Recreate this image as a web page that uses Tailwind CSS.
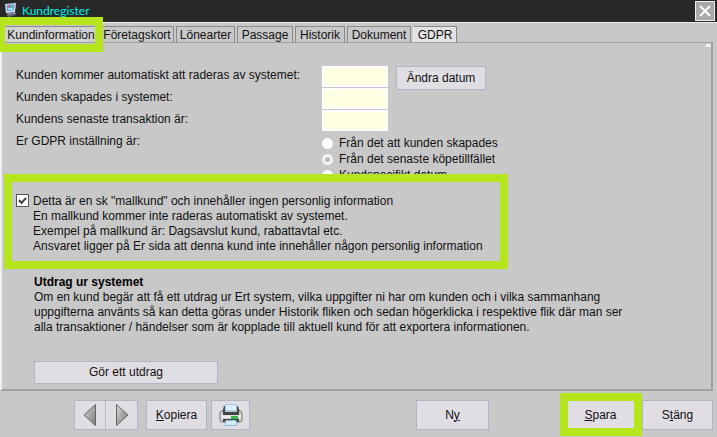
<!DOCTYPE html>
<html lang="sv">
<head>
  <meta charset="UTF-8">
  <meta name="viewport" content="width=device-width, initial-scale=1.0">
  <title>Kundregister</title>
  <script src="https://cdn.jsdelivr.net/npm/@tailwindcss/browser@4"></script>
</head>
<body class="bg-[#c8c8c8] min-h-screen flex flex-col font-['Liberation_Sans',Arial,sans-serif] text-[12px] leading-[15px] text-[#111]">
  <header class="h-[22px] shrink-0 bg-[#282828] flex items-center justify-between pl-1 pr-[2px]">
    <div class="flex items-center gap-1 pb-[2px]">
      <svg class="w-[14px] h-[14px]" viewBox="0 0 14 14" aria-hidden="true">
        <path d="M1 1l11-1-1 9-9 1z" fill="#d5dfee"/>
        <path d="M2.500 2l8-.7-.7 6.200-6.800.7z" fill="#5b9be0"/>
        <path d="M4 2.500h2v2H4z" fill="#e0686a"/>
        <path d="M7 2.500h2v2H7z" fill="#6cc070"/>
        <path d="M4 5h5v2H4z" fill="#a8e0f5"/>
        <path d="M3 10l8-1 1 2-8 1z" fill="#8791a5"/>
        <path d="M2 12l9-1 1 1-8 2z" fill="#5d6679"/>
      </svg>
      <h1 class="font-[Lato,sans-serif] text-[12px] text-[#00f0e6]">Kundregister</h1>
    </div>
    <button type="button" aria-label="Stäng fönster" class="w-5 h-5 bg-[#a8a8a8] border border-[#eee] flex items-center justify-center">
      <svg class="w-3 h-3" viewBox="0 0 12 12" fill="none" stroke="#fff" stroke-width="2"><path d="M1 1l10 10M11 1L1 11"/></svg>
    </button>
  </header>

  <nav class="flex gap-[2px] pt-[3px] pl-[5px] border-t border-[#eee] h-5 shrink-0">
    <button type="button" class="h-[17px] w-[93px] border-r border-t border-[#8a8a8a] bg-[#d2d2d2] whitespace-nowrap">Kundinformation</button>
    <button type="button" class="h-[17px] w-[74px] border border-b-0 border-[#8a8a8a] bg-[#c8c8c8]">Företagskort</button>
    <button type="button" class="h-[17px] w-[59px] border border-b-0 border-[#8a8a8a] bg-[#c8c8c8]">Lönearter</button>
    <button type="button" class="h-[17px] w-[56px] border border-b-0 border-[#8a8a8a] bg-[#c8c8c8]">Passage</button>
    <button type="button" class="h-[17px] w-[50px] border border-b-0 border-[#8a8a8a] bg-[#c8c8c8]">Historik</button>
    <button type="button" class="h-[17px] w-[64px] border border-b-0 border-[#8a8a8a] bg-[#c8c8c8]">Dokument</button>
    <button type="button" class="h-[17px] w-[44px] border border-b-0 border-[#8a8a8a] border-l-[#eee] bg-[#e2e2e2]">GDPR</button>
  </nav>

  <main class="mr-1 grow border-t border-r-2 border-b-2 border-[#a0a0a0] border-l-2 border-l-[#eee] pl-[14px] pt-[23px] relative">
    <span class="absolute right-0 top-px w-[5px] h-[3px] bg-[#eee]"></span>
    <div class="grid grid-cols-[306px_66px_1fr] auto-rows-[22px]">
      <label for="deleteDate" class="pt-[2px]">Kunden kommer automatiskt att raderas av systemet:</label>
      <input id="deleteDate" type="text" class="bg-[#ffffe1] border-2 border-white h-[21px] w-full">
      <div class="pl-2"><button type="button" class="h-6 w-[90px] bg-[#e0dde3] border border-[#b4b4c8]">Ändra datum</button></div>
      <label for="createdDate" class="pt-[2px]">Kunden skapades i systemet:</label>
      <input id="createdDate" type="text" class="bg-[#ffffe1] border-2 border-white h-[21px] w-full">
      <span></span>
      <label for="lastDate" class="pt-[2px]">Kundens senaste transaktion är:</label>
      <input id="lastDate" type="text" class="bg-[#ffffe1] border-2 border-white h-[21px] w-full">
    </div>
    <fieldset class="grid grid-cols-[306px_1fr] h-[62px] pt-[2px]">
      <legend class="float-left">Er GDPR inställning är:</legend>
      <div class="col-start-2 flex flex-col gap-px pt-[2px]">
        <label class="flex items-center gap-[6px]"><input type="radio" name="gdpr" class="appearance-none w-[11px] h-[11px] rounded-full bg-white">Från det att kunden skapades</label>
        <label class="flex items-center gap-[6px]"><input type="radio" name="gdpr" checked class="appearance-none w-[11px] h-[11px] rounded-full bg-[#bbb] border-[3px] border-[#f4f4f4]">Från det senaste köpetillfället</label>
        <label class="flex items-center gap-[6px]"><input type="radio" name="gdpr" class="appearance-none w-[11px] h-[11px] rounded-full bg-white">Kundspecifikt datum</label>
      </div>
    </fieldset>
    <div class="flex gap-1">
      <span class="relative w-[13px] h-[13px] shrink-0">
        <input id="template" type="checkbox" checked class="appearance-none block w-[13px] h-[13px] bg-white border border-[#555]">
        <svg class="absolute inset-0 w-[13px] h-[13px] pointer-events-none" viewBox="0 0 13 13" fill="none" stroke="#444" stroke-width="2"><path d="M3 6l2.500 3L10 4"/></svg>
      </span>
      <label for="template">Detta är en sk "mallkund" och innehåller ingen personlig information<br>En mallkund kommer inte raderas automatiskt av systemet.<br>Exempel på mallkund är: Dagsavslut kund, rabattavtal etc.<br>Ansvaret ligger på Er sida att denna kund inte innehåller någon personlig information</label>
    </div>
    <section class="pl-[18px] pt-[21px]">
      <h2 class="font-bold text-black">Utdrag ur systemet</h2>
      <p>Om en kund begär att få ett utdrag ur Ert system, vilka uppgifter ni har om kunden och i vilka sammanhang<br>uppgifterna använts så kan detta göras under Historik fliken och sedan högerklicka i respektive flik där man ser<br>alla transaktioner / händelser som är kopplade till aktuell kund för att exportera informationen.</p>
      <button type="button" class="mt-[26px] block h-[23px] w-[184px] bg-[#e0dde3] border border-[#b4b4c8]">Gör ett utdrag</button>
    </section>
    <div class="absolute left-[2px] top-[131px] w-[504px] h-[95px] border-8 border-[#b5e61d] pointer-events-none"></div>
  </main>

  <footer class="shrink-0 flex items-center h-[46px] pt-[2px] pl-[74px] pr-1">
    <button type="button" aria-label="Föregående" class="w-8 h-[30px] bg-[#e0dde3] border border-[#b4b4c8] flex items-center justify-center">
      <svg class="w-[14px] h-6" viewBox="0 0 14 24">
        <defs><linearGradient id="metal" x1="0" y1="0" x2="1" y2="1"><stop offset="0" stop-color="#d8d8d8"/><stop offset="1" stop-color="#777"/></linearGradient></defs>
        <path d="M12.500 1.500v21L1 12z" fill="url(#metal)" stroke="#666"/>
      </svg>
    </button>
    <button type="button" aria-label="Nästa" class="w-8 h-[30px] bg-[#e0dde3] border border-l-0 border-[#b4b4c8] flex items-center justify-center">
      <svg class="w-[14px] h-6" viewBox="0 0 14 24"><path d="M1.500 1.500v21L13 12z" fill="url(#metal)" stroke="#666"/></svg>
    </button>
    <button type="button" class="ml-2 w-[61px] h-[30px] bg-[#e0dde3] border border-[#b4b4c8]"><u>K</u>opiera</button>
    <button type="button" aria-label="Skriv ut" class="ml-1 w-[39px] h-[30px] bg-[#e0dde3] border border-[#b4b4c8] flex items-center justify-center">
      <svg class="w-6 h-6" viewBox="0 0 24 24">
        <path d="M5 3h3v6H3zM16 3h3l2 6h-5z" fill="#555"/>
        <path d="M6.500 1.500h11v7h-11z" fill="#dff0fc" stroke="#9cc4e4"/>
        <rect x="1" y="8" width="22" height="11" rx="2" fill="#d4d4d4" stroke="#777"/>
        <path d="M4 7h16v5H4z" fill="#444"/>
        <path d="M6 7h12v2H6z" fill="#aecbe0"/>
        <path d="M2 12.500h20v2H2z" fill="#f2f2f2"/>
        <path d="M12 13h7v3h-7z" fill="#35b44a"/>
        <path d="M4 16h16v3H4z" fill="#444"/>
        <path d="M7 17.500h10l1 5H6z" fill="#d6ebfb" stroke="#8bbbe0"/>
      </svg>
    </button>
    <button type="button" class="ml-auto w-[73px] h-[30px] bg-[#e0dde3] border border-[#b4b4c8]">N<u>y</u></button>
    <div class="relative ml-[75px]">
      <button type="button" class="w-[73px] h-[30px] bg-[#e0dde3] border border-[#b4b4c8]"><u>S</u>para</button>
      <div class="absolute -left-1 -top-[7px] w-[82px] h-[43px] border-8 border-[#b5e61d] pointer-events-none"></div>
    </div>
    <button type="button" class="ml-[5px] w-[71px] h-[30px] bg-[#e0dde3] border border-[#b4b4c8]">S<u>t</u>äng</button>
  </footer>

  <div class="absolute left-0 top-[17px] w-[103px] h-[35px] border-8 border-l-[5px] border-[#b5e61d] pointer-events-none"></div>
</body>
</html>
